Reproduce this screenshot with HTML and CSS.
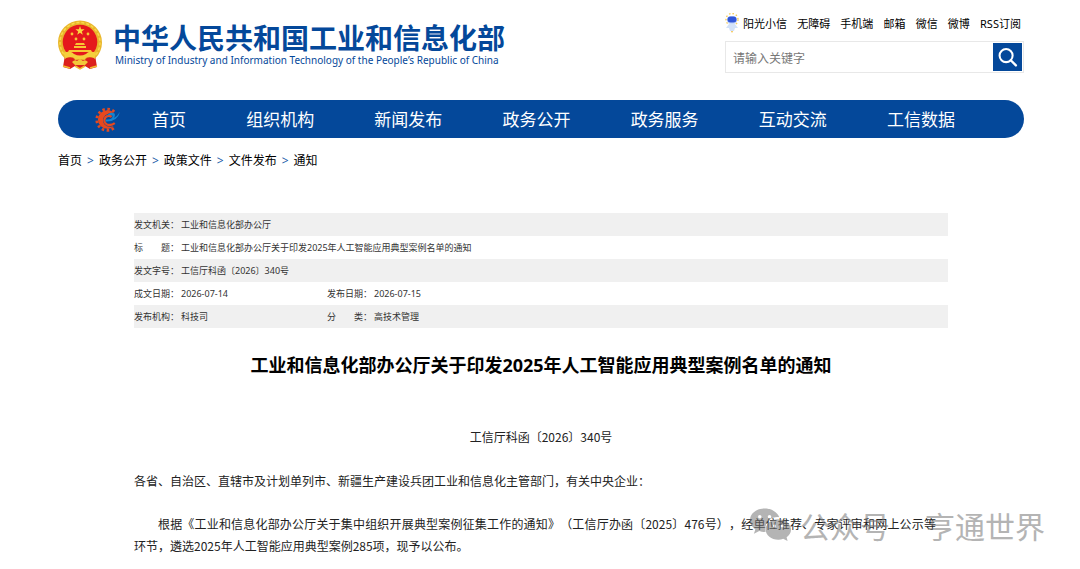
FILE: index.html
```
<!DOCTYPE html>
<html lang="zh-CN">
<head>
<meta charset="utf-8">
<meta name="viewport" content="width=device-width, initial-scale=1">
<title>工业和信息化部办公厅关于印发2025年人工智能应用典型案例名单的通知</title>
<link rel="stylesheet" href="styles.css">
</head>
<body>
<div class="page">
  <header class="header">
    <a class="brand" href="#">
      <svg class="emblem" viewBox="0 0 44 50" aria-hidden="true">
        <path d="M7 35 L37 35 L39 47 L32 49 L27 46 L22 49 L17 46 L12 49 L5 47 Z" fill="#d8201d"/>
        <circle cx="22" cy="22.500" r="22" fill="#e9b62c"/>
        <circle cx="22" cy="22.500" r="20" fill="none" stroke="#f8d94c" stroke-width="1.500" stroke-dasharray="3 2"/>
        <circle cx="22" cy="22" r="17.300" fill="#e5181c"/>
        <path d="M22 6 L23.100 9.300 H26.600 L23.800 11.400 L24.800 14.700 L22 12.700 L19.200 14.700 L20.200 11.400 L17.400 9.300 H20.900 Z" fill="#fbd83e"/>
        <g fill="#f8c634"><circle cx="14" cy="14" r="1.400"/><circle cx="30" cy="14" r="1.400"/><circle cx="18" cy="19" r="1.400"/><circle cx="26" cy="19" r="1.400"/>
        <path d="M17 25 L18 23 H26 L27 25 Z M16 26 H28 V28 H16 Z M11 30 H33 L34 32 H10 Z"/></g>
        <path d="M5 33 Q13 30 16 34 Q22 37 28 34 Q31 30 39 33 L36 38 Q29 36 27 39 L17 39 Q15 36 8 38 Z" fill="#f5cf3c"/>
        <path d="M8 38 Q15 36 17 40 H27 Q29 36 36 38 L37 46 L32 48 L27 45 L22 48 L17 45 L12 48 L7 46 Z" fill="#dd211d"/>
        <path d="M14 42 Q17 39 19 41 L22 39 L25 41 Q27 39 30 42 L27 45 H17 Z" fill="#f2c839"/>
        <path d="M5 46 L12 48 M39 46 L32 48 M17 46 L22 49 L27 46" fill="none" stroke="#f2bc32" stroke-width="1.500"/>
      </svg>
      <span class="brand-text">
        <span class="brand-cn">中华人民共和国工业和信息化部</span>
        <span class="brand-en" lang="en">Ministry of Industry and Information Technology of the People’s Republic of China</span>
      </span>
    </a>
    <div class="tools">
      <nav class="quick" aria-label="快捷链接">
        <a class="quick-first" href="#"><svg class="mascot" viewBox="0 0 14 20" aria-hidden="true">
          <circle cx="7" cy="6.500" r="6" fill="none" stroke="#f5cc57" stroke-width="1.400" stroke-dasharray="1.500 2"/>
          <rect x="2" y="3" width="10" height="8" rx="4" fill="#c7d8fb"/><rect x="2.500" y="3.500" width="9" height="6" rx="3" fill="#3156d8"/>
          <path d="M4 11 H10 L13 15 L10 15 L9 18 H5 L4 15 L1 15 Z" fill="#d3e2f8"/><path d="M6 18 h2 l-1 2z" fill="#f3bd3c"/>
        </svg>阳光小信</a>
        <a href="#">无障碍</a><a href="#">手机端</a><a href="#">邮箱</a><a href="#">微信</a><a href="#">微博</a><a href="#">RSS订阅</a>
      </nav>
      <form class="search">
        <input class="search-input" type="text" placeholder="请输入关键字" aria-label="请输入关键字">
        <button class="search-button" type="button" aria-label="搜索"><svg viewBox="0 0 30 30" aria-hidden="true"><circle cx="13.500" cy="13.500" r="7" fill="none" stroke="#fff" stroke-width="2.200"/><path d="M18.500 18.500 L24 24" stroke="#fff" stroke-width="2.500" stroke-linecap="round"/></svg></button>
      </form>
    </div>
  </header>

  <nav class="mainnav" aria-label="主导航">
    <svg class="gear" viewBox="0 0 24 24" aria-hidden="true">
      <path d="M18.500 4.500 A10.200 10.200 0 1 0 19 19.500" fill="none" stroke="#e44a20" stroke-width="2.600" stroke-dasharray="2.400 2.400"/>
      <path d="M18 5.500 A9 9 0 1 0 18 18.500 Q12 20 9 16.500 Q6 12 10 8 Q13.500 5 18 5.500 Z" fill="#e8481d"/>
      <path d="M16 9.500 Q13 7 10 10 Q7.500 14 11 16.500 Q15 18.500 19 15.500" fill="none" stroke="#e8481d" stroke-width="2.200"/>
      <path d="M24 4.500 Q21.500 14.500 10 14 L10.500 12 Q17 12.500 17 8.500 Q14 6.500 11 9 Q14 4 18.500 6 Q20 8 18 10.500 Q21.500 9 24 4.500 Z" fill="#1584cf"/>
    </svg>
    <div class="nav-links">
      <a href="#">首页</a><a href="#">组织机构</a><a href="#">新闻发布</a><a href="#">政务公开</a><a href="#">政务服务</a><a href="#">互动交流</a><a href="#">工信数据</a>
    </div>
  </nav>

  <nav class="crumbs" aria-label="当前位置">
    <a href="#">首页</a><span>&gt;</span><a href="#">政务公开</a><span>&gt;</span><a href="#">政策文件</a><span>&gt;</span><a href="#">文件发布</a><span>&gt;</span><a href="#">通知</a>
  </nav>

  <main class="article">
    <table class="meta">
      <colgroup><col class="col-label"><col class="col-value"><col class="col-label"><col></colgroup>
      <tbody>
      <tr><th scope="row">发文机关：</th><td colspan="3">工业和信息化部办公厅</td></tr>
      <tr><th scope="row">标　　题：</th><td colspan="3">工业和信息化部办公厅关于印发2025年人工智能应用典型案例名单的通知</td></tr>
      <tr><th scope="row">发文字号：</th><td colspan="3">工信厅科函〔2026〕340号</td></tr>
      <tr><th scope="row">成文日期：</th><td>2026-07-14</td><th scope="row">发布日期：</th><td>2026-07-15</td></tr>
      <tr><th scope="row">发布机构：</th><td>科技司</td><th scope="row">分　　类：</th><td>高技术管理</td></tr>
      </tbody>
    </table>
    <h1 class="title">工业和信息化部办公厅关于印发2025年人工智能应用典型案例名单的通知</h1>
    <p class="doc-number">工信厅科函〔2026〕340号</p>
    <p class="salutation">各省、自治区、直辖市及计划单列市、新疆生产建设兵团工业和信息化主管部门，有关中央企业：</p>
    <p class="paragraph">根据《工业和信息化部办公厅关于集中组织开展典型案例征集工作的通知》（工信厅办函〔2025〕476号），经单位推荐、专家评审和网上公示等环节，遴选2025年人工智能应用典型案例285项，现予以公布。</p>
    <div class="watermark">
      <svg viewBox="0 0 42 34" aria-hidden="true">
        <path d="M15 0 C6 0 0 5.500 0 12 C0 16 2 19 5.500 21.500 L4 26 L9.500 23.200 Q13 24.500 16 24 C14 14 22 8 30 9 C28 3.500 22 0 15 0 Z"/>
        <path d="M29 11 C21 11 16 16 16 21.500 C16 27.500 22 32 29 32 Q32 32 34 31 L38.500 33.500 L37.500 29.500 C40 27.500 42 25 42 21.500 C42 15.500 36 11 29 11 Z"/>
        <g class="eyes"><circle cx="10" cy="8.500" r="1.800"/><circle cx="20" cy="8.500" r="1.800"/><circle cx="25" cy="18" r="1.500"/><circle cx="33" cy="18" r="1.500"/></g>
      </svg>
      <span>公众号</span><span>亨通世界</span>
    </div>
  </main>
</div>
</body>
</html>
```
FILE: styles.css
```
* { box-sizing: border-box; }

body {
  margin: 0;
  background: #fff;
  color: #000;
  font-family: "Noto Sans", "Noto Sans CJK SC", sans-serif;
  font-size: 12px;
  text-spacing-trim: space-all;
}

a { color: inherit; text-decoration: none; }

.page { padding: 12px 56px 0 58px; }

.header { display: flex; justify-content: space-between; }

.brand { display: flex; gap: 11px; padding-top: 8px; color: #04489a; }
.emblem { width: 44px; height: 50px; }
.brand-text { display: flex; flex-direction: column; }
.brand-cn {
  font-family: "Noto Sans CJK SC", sans-serif;
  font-size: 28px;
  font-weight: 700;
  line-height: 34px;
}
.brand-en { padding-left: 2px; font-size: 10px; line-height: 13px; white-space: nowrap; }

.tools { width: 299px; }
.quick {
  display: flex;
  justify-content: space-between;
  align-items: center;
  height: 22px;
  padding-right: 3px;
  font-size: 11px;
}
.quick-first { display: flex; align-items: center; gap: 4px; }
.mascot { width: 14px; height: 20px; }

.search {
  display: flex;
  height: 32px;
  margin-top: 7px;
  padding: 1px;
  border: 1px solid #e8e8e8;
}
.search-input {
  flex: 1;
  min-width: 0;
  padding: 2px 6px 0;
  border: 0;
  outline: 0;
  font-family: inherit;
  font-size: 12px;
}
.search-input::placeholder { color: #777; }
.search-button { width: 29px; padding: 0; border: 0; background: #04489a; }
.search-button svg { display: block; width: 29px; height: 28px; }

.mainnav {
  display: flex;
  align-items: center;
  height: 38px;
  margin-top: 27px;
  padding: 0 69px 0 37px;
  border-radius: 19px;
  background: #04489a;
  color: #fff;
}
.gear { width: 25px; height: 25px; }
.nav-links {
  display: flex;
  flex: 1;
  justify-content: space-between;
  margin-left: 32px;
  padding-bottom: 2px;
  font-size: 17px;
}

.crumbs { display: flex; gap: 5px; margin-top: 14px; line-height: 18px; }
.crumbs span { color: #1c5ca8; }

.article { position: relative; padding: 0 76px; }

.meta {
  width: 100%;
  margin-top: 43px;
  border-collapse: collapse;
  table-layout: fixed;
  color: #333;
  font-size: 9px;
}
.col-label { width: 47px; }
.col-value { width: 146px; }
.meta tr { height: 23px; }
.meta tr:nth-child(odd) { background: #f0f0f0; }
.meta th, .meta td { padding: 0 0 1px; font-weight: 400; text-align: left; white-space: nowrap; }

.title { margin: 23px 0 0; font-size: 18px; line-height: 28px; text-align: center; }

.doc-number, .salutation, .paragraph {
  margin: 0;
  color: #222;
  font-family: "Noto Sans CJK SC", sans-serif;
  line-height: 22px;
}
.doc-number { margin-top: 47px; text-align: center; }
.salutation { margin-top: 22px; }
.paragraph { margin-top: 21px; padding-right: 12px; text-align: justify; text-indent: 24px; }

/* Account signature laid over the article text */
.watermark {
  position: absolute;
  right: -21px;
  bottom: 12px;
  display: flex;
  align-items: center;
  color: #777;
  font-family: "Noto Sans CJK SC", sans-serif;
  font-size: 30px;
  line-height: 40px;
  opacity: 0.55;
}
.watermark svg { width: 41px; height: 34px; margin-right: 9px; fill: currentColor; }
.watermark .eyes { fill: #fff; }
.watermark span + span { margin-left: 35px; }
```
